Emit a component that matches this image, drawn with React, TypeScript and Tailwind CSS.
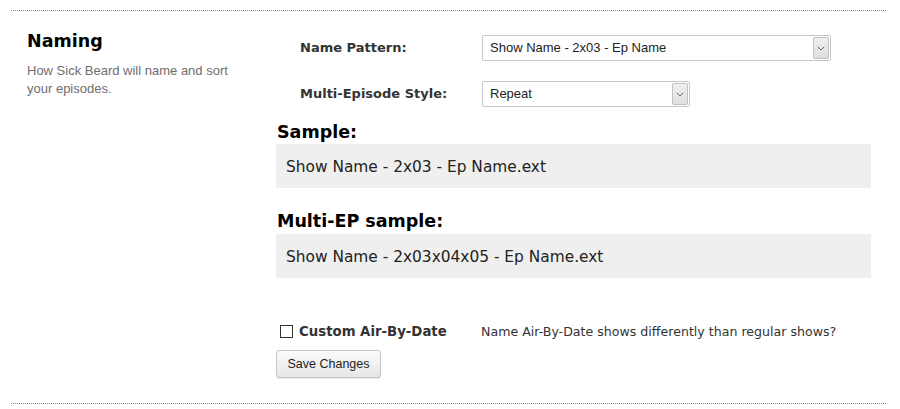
import React from "react";

const verdana = { fontFamily: '"DejaVu Sans", Verdana, sans-serif' };

function Chevron() {
  return (
    <svg width="8" height="5" viewBox="0 0 8 5" fill="none">
      <path d="M0.8 0.8 L4 4 L7.2 0.8" stroke="#666" strokeWidth="1" />
    </svg>
  );
}

function Select({ value, width }: { value: string; width: string }) {
  return (
    <div
      className={`flex h-[26px] items-stretch rounded-[2px] border border-[#c8c8c8] bg-white ${width}`}
    >
      <div className="flex flex-1 items-center pl-[7px] font-['Liberation_Sans',Arial,sans-serif] text-[13px] text-[#222]">
        {value}
      </div>
      <div className="m-[1px] flex w-[16px] items-center justify-center rounded-[2px] border border-[#c0c0c0] bg-gradient-to-b from-[#f0f0f0] to-[#dedede]">
        <Chevron />
      </div>
    </div>
  );
}

export default function App() {
  return (
    <div className="relative h-[409px] w-[900px] overflow-hidden bg-white">
      <div className="mx-[11px] mt-[10px] w-[875px] border-t border-dotted border-[#888]" />
      <div className="flex">
        <div className="w-[276px] pl-[27px] pt-[18px]">
          <h2
            className="text-[17.5px] font-bold leading-[24px] text-black"
            style={verdana}
          >
            Naming
          </h2>
          <p className="mt-[9px] w-[215px] font-['Liberation_Sans',Arial,sans-serif] text-[13px] leading-[18px] text-[#6e6e6e]">
            How Sick Beard will name and sort your episodes.
          </p>
        </div>
        <div className="w-[595px] pt-[24px]">
          <div className="flex items-center">
            <div
              className="w-[206px] pl-[24px] text-[13px] font-bold text-[#333]"
              style={verdana}
            >
              Name Pattern:
            </div>
            <Select value="Show Name - 2x03 - Ep Name" width="w-[349px]" />
          </div>
          <div className="mt-[20px] flex items-center">
            <div
              className="w-[206px] pl-[24px] text-[13px] font-bold text-[#333]"
              style={verdana}
            >
              Multi-Episode Style:
            </div>
            <Select value="Repeat" width="w-[208px]" />
          </div>
          <h3
            className="mt-[13px] pl-[1px] text-[17.5px] font-bold leading-[24px] text-black"
            style={verdana}
          >
            Sample:
          </h3>
          <div
            className="mt-0 flex h-[44px] items-center bg-[#efefef] pl-[10px] pt-[4px] text-[15.4px] text-[#222]"
            style={verdana}
          >
            Show Name - 2x03 - Ep Name.ext
          </div>
          <h3
            className="mt-[21px] pl-[1px] text-[17.5px] font-bold leading-[24px] text-black"
            style={verdana}
          >
            Multi-EP sample:
          </h3>
          <div
            className="mt-[1px] flex h-[44px] items-center bg-[#efefef] pl-[10px] pt-[4px] text-[15.4px] text-[#222]"
            style={verdana}
          >
            Show Name - 2x03x04x05 - Ep Name.ext
          </div>
          <div className="mt-[44px] flex items-center">
            <div className="ml-[4px] h-[13px] w-[13px] border border-[#333] bg-white" />
            <div
              className="ml-[6px] w-[182px] text-[13.3px] font-bold text-[#333]"
              style={verdana}
            >
              Custom Air-By-Date
            </div>
            <div className="text-[12.6px] text-[#333]" style={verdana}>
              Name Air-By-Date shows differently than regular shows?
            </div>
          </div>
          <button className="mt-[8px] h-[28px] w-[105px] rounded-[3px] border border-[#c4c4c4] bg-gradient-to-b from-[#fafafa] to-[#e6e6e6] font-['Liberation_Sans',Arial,sans-serif] text-[12.5px] text-[#222] shadow-[0_1px_1px_rgba(0,0,0,0.1)]">
            Save Changes
          </button>
        </div>
      </div>
      <div className="absolute left-[11px] top-[403px] w-[875px] border-t border-dotted border-[#888]" />
    </div>
  );
}
